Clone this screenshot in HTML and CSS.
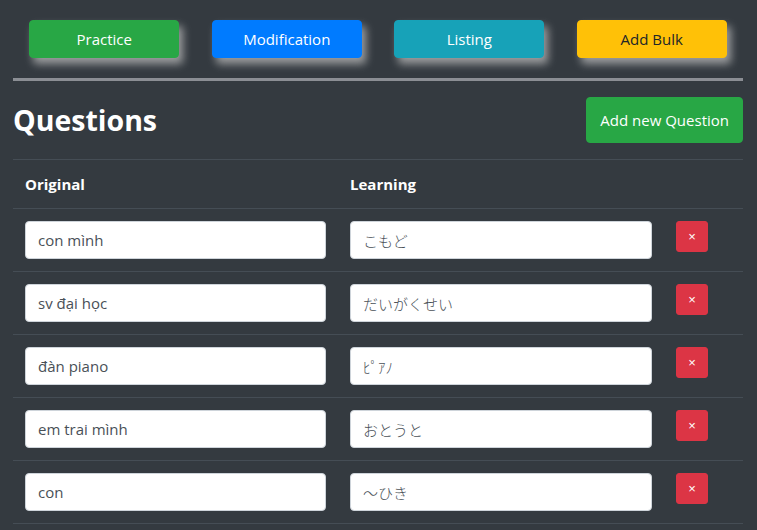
FILE: index.html
```html
<!DOCTYPE html>
<html lang="vi">
<head>
<meta charset="utf-8">
<title>Questions</title>
<link rel="stylesheet" href="styles.css">
</head>
<body>
<div class="container">
  <nav class="nav">
    <button class="btn btn-nav btn-green">Practice</button>
    <button class="btn btn-nav btn-blue">Modification</button>
    <button class="btn btn-nav btn-teal">Listing</button>
    <button class="btn btn-nav btn-yellow">Add Bulk</button>
  </nav>
  <div class="rule"></div>
  <div class="header">
    <h2 class="title">Questions</h2>
    <button class="btn btn-add btn-green">Add new Question</button>
  </div>
  <table class="table">
    <colgroup>
      <col class="col-orig">
      <col class="col-learn">
      <col class="col-del">
    </colgroup>
    <thead>
      <tr><th>Original</th><th>Learning</th><th></th></tr>
    </thead>
    <tbody>
      <tr>
        <td><input class="field" type="text" value="con mình"></td>
        <td><input class="field jp" type="text" value="こもど"></td>
        <td><button class="btn-del">×</button></td>
      </tr>
      <tr>
        <td><input class="field" type="text" value="sv đại học"></td>
        <td><input class="field jp" type="text" value="だいがくせい"></td>
        <td><button class="btn-del">×</button></td>
      </tr>
      <tr>
        <td><input class="field" type="text" value="đàn piano"></td>
        <td><input class="field jp" type="text" value="ﾋﾟｱﾉ"></td>
        <td><button class="btn-del">×</button></td>
      </tr>
      <tr>
        <td><input class="field" type="text" value="em trai mình"></td>
        <td><input class="field jp" type="text" value="おとうと"></td>
        <td><button class="btn-del">×</button></td>
      </tr>
      <tr>
        <td><input class="field" type="text" value="con"></td>
        <td><input class="field jp" type="text" value="〜ひき"></td>
        <td><button class="btn-del">×</button></td>
      </tr>
    </tbody>
  </table>
</div>
</body>
</html>
```

FILE: styles.css
```css
* { box-sizing: border-box; }

body {
  margin: 0;
  background: #343a40;
  font-family: "Open Sans", "Noto Sans CJK JP", sans-serif;
  color: #fff;
}

.container {
  padding: 0 14px 0 13px;
}

.nav {
  display: grid;
  grid-template-columns: repeat(4, 1fr);
  justify-items: center;
  padding-top: 20px;
}

.btn {
  border: 1px solid transparent;
  border-radius: 4px;
  font-family: inherit;
  font-size: 15px;
  color: #fff;
  cursor: pointer;
}

.btn-nav {
  width: 150px;
  height: 38px;
  padding: 0;
  box-shadow: 4px 6px 9px rgba(190, 190, 190, 0.75);
}

.btn-green { background: #28a745; border-color: #28a745; }
.btn-blue { background: #007bff; border-color: #007bff; }
.btn-teal { background: #17a2b8; border-color: #17a2b8; }
.btn-yellow { background: #ffc107; border-color: #ffc107; color: #212529; }

.rule {
  height: 3px;
  background: #8b8e94;
  margin: 20px 0 16px;
}

.header {
  display: flex;
  justify-content: space-between;
  align-items: center;
  margin-bottom: 16px;
}

.title {
  margin: 0;
  font-size: 28.5px;
  font-weight: 700;
  line-height: 1.2;
}

.btn-add {
  height: 46px;
  padding: 0 13px;
  font-size: 15px;
}

.table {
  width: 100%;
  border-collapse: collapse;
  table-layout: fixed;
  border-bottom: 1px solid #454d55;
}

.col-orig { width: 325px; }
.col-learn { width: 326px; }
.col-del { width: 79px; }

.table th,
.table td {
  padding: 12px;
  border-top: 1px solid #454d55;
  vertical-align: top;
  text-align: left;
}

.table th {
  font-size: 15px;
  font-weight: 700;
  line-height: 24px;
}

.field {
  display: block;
  width: 100%;
  height: 38px;
  padding: 6px 12px;
  border: 1px solid #ced4da;
  border-radius: 4px;
  background: #fff;
  color: #495057;
  font-family: "Open Sans", "Noto Sans CJK JP", sans-serif;
  font-size: 15px;
}

.field.jp {
  font-weight: 300;
}

.btn-del {
  display: block;
  width: 32px;
  height: 31px;
  padding: 0;
  border: 1px solid #dc3545;
  border-radius: 3px;
  background: #dc3545;
  color: #fff;
  font-family: "Liberation Sans", sans-serif;
  font-size: 13px;
  cursor: pointer;
}
```
